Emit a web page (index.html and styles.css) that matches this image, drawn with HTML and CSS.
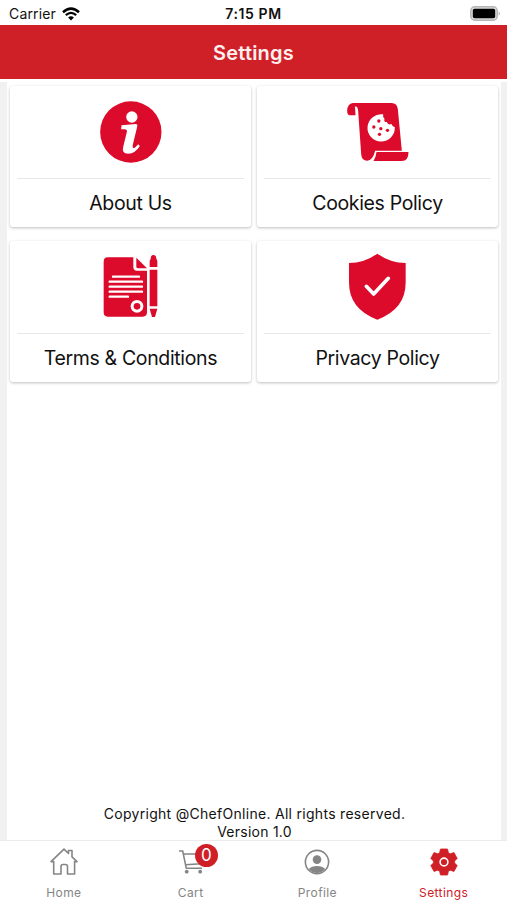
FILE: index.html
```html
<!DOCTYPE html>
<html lang="en">
<head>
    <meta charset="UTF-8">
    <meta name="viewport" content="width=device-width, initial-scale=1.0">
    <title>Settings</title>
    <link rel="stylesheet" href="styles.css">
</head>
<body>
    <div class="status-bar">
        <div class="carrier">
            <span>Carrier</span>
            <svg class="wifi" viewBox="0 0 18 14">
                <path d="M1 5.2 Q9 -2 17 5.2" fill="none" stroke="#000" stroke-width="2.5"/>
                <path d="M3.8 8.1 Q9 3.6 14.2 8.1" fill="none" stroke="#000" stroke-width="2.3"/>
                <path d="M6.1 10.6 Q9 8 11.9 10.6 L9 13.5 Z"/>
            </svg>
        </div>
        <div class="time">7:15 PM</div>
        <div class="battery">
            <svg viewBox="0 0 31 15" width="31" height="15">
                <rect x=".8" y=".8" width="26.4" height="13.4" rx="4" fill="#ddd" stroke="#b5b5b5" stroke-width="1.5"/>
                <rect x="2.8" y="2.8" width="22.4" height="9.4" rx="1.8"/>
                <path d="M28.7 5.2 Q31 7.5 28.7 9.8 Z" fill="#aaa"/>
            </svg>
        </div>
    </div>

    <header class="header">
        <h1>Settings</h1>
    </header>

    <main class="content">
        <div class="cards">
            <a class="card">
                <svg class="card-icon" viewBox="1.5 0 270 240">
                    <circle cx="136" cy="126" r="92"/>
                    <circle class="cut" cx="139" cy="81" r="17"/>
                    <path class="cut" d="M108 106 L151 102 Q157 102 155 110 L142 164 Q140 175 146 174 Q151 172 158 163 L163 168 Q149 191 128 191 Q108 191 113 171 L124 126 Q126 118 117 118 L107 118 Z"/>
                </svg>
                <span class="card-title">About Us</span>
            </a>
            <a class="card">
                <svg class="card-icon" viewBox="-7.5 0 270 240">
                    <path d="M52 39 H168 Q185 39 187 58 L199 182 H119 Q112 211 95 212 Q78 212 77 192 L68 64 Q67 47 58 50 Q59 53 60 76 H43 Q35 75 35 62 Q36 41 52 39 Z"/>
                    <path d="M123 186 H219 Q219 213 199 213 H114 Q121 202 123 186 Z"/>
                    <path class="cut" d="M143 73 A41 41 0 1 0 178 112 Q170 109 168 102 Q157 106 154 96 Q144 97 147 86 Q141 81 143 73 Z"/>
                    <circle cx="130" cy="93" r="5"/>
                    <circle cx="115" cy="111" r="5"/>
                    <circle cx="136" cy="116" r="5"/>
                    <circle cx="156" cy="121" r="5"/>
                    <circle cx="132" cy="133" r="5"/>
                </svg>
                <span class="card-title">Cookies Policy</span>
            </a>
            <a class="card">
                <svg class="card-icon" viewBox="-12 0 270 240">
                    <path d="M53 37 H130 V66 Q130 77 141 77 H171 V202 Q171 215 158 215 H53 Q41 215 41 202 V50 Q41 37 53 37 Z"/>
                    <path d="M139 38 L171 70 H144 Q139 70 139 65 Z"/>
                    <path class="line" d="M69 95 H147 M59 110 H156 M59 125 H156 M59 140 H156 M59 155 H114"/>
                    <circle class="cut" cx="141" cy="184" r="19"/>
                    <circle cx="141" cy="184" r="10"/>
                    <path d="M179 66 V50 Q179 44 182 42 Q182 30 190 30 Q199 30 199 42 Q202 44 202 50 V66 Z M179 74 H202 V184 H179 Z M179 191 H202 L195 216 H186 Z"/>
                </svg>
                <span class="card-title">Terms &amp; Conditions</span>
            </a>
            <a class="card">
                <svg class="card-icon" viewBox="-12 0 270 240">
                    <path d="M121 26 Q160 54 206 54 V112 Q206 193 121 224 Q36 193 36 112 V54 Q82 54 121 26 Z"/>
                    <path class="check" d="M88 124 L110 147 L154 100"/>
                </svg>
                <span class="card-title">Privacy Policy</span>
            </a>
        </div>
        <footer class="copyright">
            <p class="rights">Copyright @ChefOnline. All rights reserved.</p>
            <p class="version">Version 1.0</p>
        </footer>
    </main>

    <nav class="tab-bar">
        <a class="tab">
            <svg class="tab-icon" viewBox="0 0 30 30">
                <path d="M2 14.6 L15 2.2 L19.5 6.5 V3.5 H23 V9.8 L28 14.6 H25.6 V27 H18.5 V19.5 Q18.5 17.5 16.5 17.5 H14 Q12 17.5 12 19.5 V27 H4.7 V14.6 Z" fill="none" stroke="currentColor" stroke-width="1.6" stroke-linejoin="round"/>
            </svg>
            <span>Home</span>
        </a>
        <a class="tab">
            <svg class="tab-icon" viewBox="0 0 30 30">
                <path d="M3 4 H6.7 L10.3 21.3 H26 M7.5 7 H27 L25 16.7 L9.5 17.7" fill="none" stroke="currentColor" stroke-width="1.6"/>
                <circle cx="10.7" cy="24.7" r="1.9" fill="currentColor"/>
                <circle cx="24.2" cy="24.7" r="1.9" fill="currentColor"/>
            </svg>
            <span class="badge">0</span>
            <span>Cart</span>
        </a>
        <a class="tab">
            <svg class="tab-icon" viewBox="0 0 30 30">
                <circle cx="15" cy="15" r="11.6" fill="none" stroke="currentColor" stroke-width="1.6"/>
                <circle cx="15" cy="12.6" r="4.3" fill="currentColor"/>
                <path d="M6.8 22 Q9.5 19 15 19 Q20.5 19 23.2 22 Q20 26 15 26 Q10 26 6.8 22 Z" fill="currentColor"/>
            </svg>
            <span>Profile</span>
        </a>
        <a class="tab active">
            <svg class="tab-icon" viewBox="0 0 30 30">
                <path d="M11.5 2 H18.5 L19.4 5.7 L21.2 6.8 L25 5.6 L28.2 11.4 L25.6 14 V16 L28.2 18.6 L25 24.4 L21.2 23.2 L19.4 24.3 L18.5 28 H11.5 L10.6 24.3 L8.8 23.2 L5 24.4 L1.8 18.6 L4.4 16 V14 L1.8 11.4 L5 5.6 L8.8 6.8 L10.6 5.7 Z" fill="currentColor" stroke="currentColor" stroke-width=".8" stroke-linejoin="round"/>
                <circle cx="15" cy="15" r="3.9" fill="none" stroke="#fff" stroke-width="1.6"/>
            </svg>
            <span>Settings</span>
        </a>
    </nav>
</body>
</html>
```
FILE: styles.css
```css
* {
    box-sizing: border-box;
    margin: 0;
    padding: 0;
}

body {
    font-family: Inter, 'Liberation Sans', sans-serif;
    height: 900px;
    display: flex;
    flex-direction: column;
    background-color: white;
    color: #111;
    overflow: hidden;
}

.status-bar {
    height: 25px;
    display: grid;
    grid-template-columns: 1fr auto 1fr;
    align-items: center;
    padding: 2px 6px 0 9px;
    font-size: 14px;
}

.carrier {
    display: flex;
    align-items: center;
    gap: 6px;
    letter-spacing: 0.15px;
}

.wifi {
    width: 18px;
    height: 14px;
}

.time {
    font-weight: 600;
    letter-spacing: 0.6px;
    padding-right: 3px;
}

.battery {
    display: flex;
    justify-content: flex-end;
}

.header {
    height: 54px;
    display: flex;
    align-items: center;
    justify-content: center;
    background-color: #d02027;
    color: #fff0f0;
}

h1 {
    font-size: 20px;
    font-weight: 600;
    letter-spacing: 0.2px;
    padding-top: 1px;
}

.content {
    flex: 1;
    display: flex;
    flex-direction: column;
    justify-content: space-between;
    margin-top: 3px;
    padding: 4px 2px 0 3px;
    border-left: 7px solid #f1f1f1;
    border-right: 6px solid #f1f1f1;
}

.cards {
    display: grid;
    grid-template-columns: 241px 241px;
    gap: 14px 6px;
}

.card {
    height: 141px;
    display: flex;
    flex-direction: column;
    align-items: center;
    padding: 4px 7px 0;
    border-radius: 3px;
    background-color: white;
    box-shadow: 0 1px 3px rgba(0, 0, 0, 0.26);
}

.card-icon {
    width: 90px;
    height: 80px;
    margin-bottom: 8px;
    flex-shrink: 0;
    fill: #dc0a2b;
}

.cut {
    fill: white;
}

.line,
.check {
    fill: none;
    stroke: white;
    stroke-width: 7;
    stroke-linecap: round;
}

.check {
    stroke-width: 11;
    stroke-linejoin: round;
}

.card-title {
    width: 100%;
    height: 49px;
    border-top: 1px solid #e8e8e8;
    text-align: center;
    font-size: 19.5px;
    line-height: 49px;
    letter-spacing: -0.35px;
}

.copyright {
    text-align: center;
    font-size: 14px;
    line-height: 18px;
    margin-bottom: -1px;
}

.rights {
    letter-spacing: 0.29px;
}

.version {
    letter-spacing: 0.25px;
}

.tab-bar {
    height: 60px;
    display: grid;
    grid-template-columns: repeat(4, 1fr);
    border-top: 1px solid #ececec;
    background-color: white;
}

.tab {
    position: relative;
    display: flex;
    flex-direction: column;
    align-items: center;
    padding: 6px 0 0 1px;
    color: #858585;
    font-size: 12px;
    line-height: 16px;
    letter-spacing: 0.4px;
}

.tab-icon {
    width: 30px;
    height: 30px;
    margin-bottom: 8px;
}

.active {
    color: #d02027;
    padding-left: 0;
}

/* Cart item count */
.badge {
    position: absolute;
    top: 3px;
    left: 68px;
    width: 23px;
    height: 23px;
    border-radius: 50%;
    background-color: #d02027;
    color: white;
    font-size: 17px;
    line-height: 23px;
    text-align: center;
    letter-spacing: 0;
}
```
